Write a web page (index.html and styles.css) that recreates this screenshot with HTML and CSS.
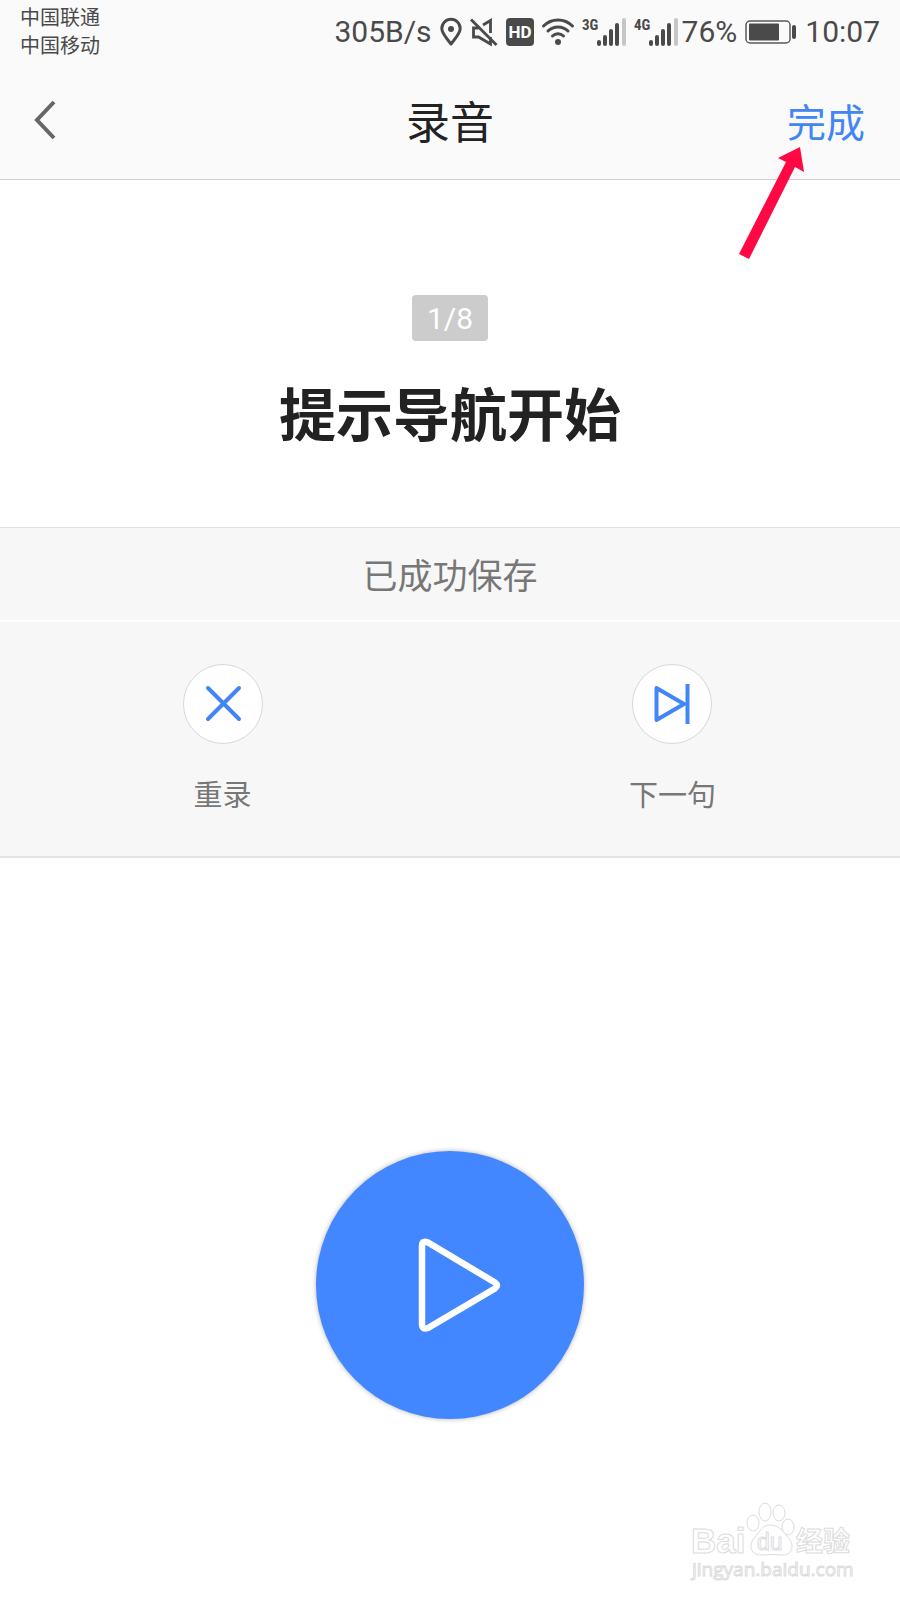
FILE: index.html
```
<!DOCTYPE html>
<html lang="zh-CN">
<head>
<meta charset="utf-8">
<meta name="viewport" content="width=device-width, initial-scale=1">
<title>录音</title>
<link rel="stylesheet" href="styles.css">
</head>
<body>
<div class="app">
  <header class="top">
    <div class="status">
      <div class="carriers">
        <span>中国联通</span>
        <span>中国移动</span>
      </div>
      <div class="indicators">
        <span>305B/s</span>
        <svg width="22" height="28" viewBox="0 0 22 28" fill="none" aria-hidden="true">
          <path d="M11 26C7 20.500 1.800 15.500 1.800 10.500a9.200 9.200 0 0 1 18.400 0C20.200 15.500 15 20.500 11 26Z" stroke="#4a4a4a" stroke-width="3" stroke-linejoin="round"/>
          <circle cx="11" cy="11" r="3" fill="#4a4a4a"/>
        </svg>
        <svg width="28" height="28" viewBox="0 0 28 28" fill="none" stroke="#4a4a4a" stroke-width="2.800" aria-hidden="true">
          <path d="M1 1.500 26.500 27"/>
          <path d="M8.500 10H3.500v9h5L20.500 26V19"/>
          <path d="M13 7 20.500 2.500V15"/>
        </svg>
        <svg width="28" height="28" viewBox="0 0 28 28" aria-hidden="true">
          <rect width="28" height="28" rx="4" fill="#4a4a4a"/>
          <text class="hd" x="14" y="20" text-anchor="middle">HD</text>
        </svg>
        <svg width="32" height="28" viewBox="0 0 32 28" fill="none" stroke="#4a4a4a" stroke-width="3" stroke-linecap="round" aria-hidden="true">
          <path d="M1.500 8a20.500 20.500 0 0 1 29 0"/>
          <path d="M6 13a14.200 14.200 0 0 1 20 0"/>
          <path d="M10.500 18a8 8 0 0 1 11 0"/>
          <circle cx="16" cy="24" r="3" fill="#4a4a4a" stroke="none"/>
        </svg>
        <svg width="44" height="28" viewBox="0 0 44 28" aria-hidden="true">
          <text class="net" x="0" y="12">3G</text>
          <g fill="#4a4a4a"><rect x="15" y="22" width="4" height="6" rx="2"/><rect x="21" y="17" width="4" height="11" rx="2"/><rect x="27" y="11" width="4" height="17" rx="2"/><rect x="33" y="5" width="4" height="23" rx="2"/></g>
          <rect x="40" y="0" width="4" height="28" rx="2" fill="#c6c6c6"/>
        </svg>
        <svg width="44" height="28" viewBox="0 0 44 28" aria-hidden="true">
          <text class="net" x="0" y="12">4G</text>
          <g fill="#4a4a4a"><rect x="15" y="22" width="4" height="6" rx="2"/><rect x="21" y="17" width="4" height="11" rx="2"/><rect x="27" y="11" width="4" height="17" rx="2"/><rect x="33" y="5" width="4" height="23" rx="2"/></g>
          <rect x="40" y="0" width="4" height="28" rx="2" fill="#c6c6c6"/>
        </svg>
        <span class="percent">76%</span>
        <svg width="52" height="24" viewBox="0 0 52 24" aria-hidden="true">
          <rect x="1" y="1" width="44" height="22" rx="4" fill="none" stroke="#5a5a5a" stroke-width="1.500"/>
          <rect x="4" y="3.500" width="30" height="17" rx="1" fill="#4a4a4a"/>
          <rect x="47" y="5" width="4" height="14" rx="2" fill="#4a4a4a"/>
        </svg>
        <time>10:07</time>
      </div>
    </div>
    <div class="navbar">
      <button class="back" type="button" aria-label="返回">
        <svg width="24" height="40" viewBox="0 0 24 40" fill="none" stroke="#666" stroke-width="4" aria-hidden="true"><path d="M19 2 2 20 19 38"/></svg>
      </button>
      <h1 class="title">录音</h1>
      <button class="done" type="button">完成</button>
    </div>
    <svg class="pointer" width="68" height="114" viewBox="0 0 68 114" aria-hidden="true">
      <path d="M62 0 66 25 57 20 11 112 1 107 48 15 40 11Z" fill="#ff0843"/>
    </svg>
  </header>

  <main class="content">
    <section class="prompt">
      <span class="count">1/8</span>
      <h2 class="phrase">提示导航开始</h2>
    </section>
    <p class="saved">已成功保存</p>
    <div class="actions">
      <button class="action" type="button">
        <span class="round">
          <svg width="40" height="40" viewBox="0 0 40 40" fill="none" stroke="#4285f4" stroke-width="4" stroke-linecap="round" aria-hidden="true"><path d="M5 4 36 35M36 4 5 35"/></svg>
        </span>
        重录
      </button>
      <button class="action" type="button">
        <span class="round">
          <svg width="40" height="40" viewBox="0 0 40 40" fill="none" stroke="#4285f4" stroke-width="4" stroke-linejoin="round" aria-hidden="true"><path d="M4.500 4V36L32 20ZM35.500 0V40"/></svg>
        </span>
        下一句
      </button>
    </div>
    <div class="player">
      <button class="play" type="button" aria-label="播放">
        <svg width="84" height="96" viewBox="0 0 84 96" fill="none" stroke="#fff" stroke-width="6.500" stroke-linejoin="round" aria-hidden="true">
          <path d="M5 9v78q0 6 6 4L78 51.500q4-3 0-6L11 5.500q-6-2.500-6 3.500Z"/>
        </svg>
      </button>
    </div>
  </main>

  <svg class="mark" width="170" height="90" viewBox="0 0 170 90" role="img" aria-label="Baidu 经验">
    <g fill="#fff" stroke="#dcdcdc">
      <text class="mark-name" x="5" y="55">Bai</text>
      <ellipse cx="67" cy="25" rx="6" ry="8"/>
      <ellipse cx="79" cy="14" rx="6" ry="9"/>
      <ellipse cx="93" cy="15" rx="6" ry="8"/>
      <ellipse cx="102" cy="29" rx="6" ry="8"/>
      <path d="M84 27c-8 0-10 7-15 12-6 6-6 18 6 18 6 0 14-1 20 0 12 1 14-10 7-18-5-5-8-12-18-12Z"/>
      <text class="mark-du" x="71" y="52">du</text>
      <text class="mark-cn" x="110" y="53">经验</text>
      <text class="mark-url" x="6" y="78">jingyan.baidu.com</text>
    </g>
  </svg>
</div>
</body>
</html>
```
FILE: styles.css
```
* {
  box-sizing: border-box;
}

body {
  margin: 0;
  background: #fff;
  color: #222;
  font-family: Roboto, "Noto Sans CJK SC", sans-serif;
}

button {
  margin: 0;
  padding: 0;
  border: 0;
  background: none;
  font: inherit;
  cursor: pointer;
}

svg {
  display: block;
  flex: none;
  overflow: visible;
}

h1,
h2,
p {
  margin: 0;
  font-weight: 400;
}

.app {
  position: relative;
  display: flex;
  flex-direction: column;
  min-height: 100vh;
}

.top {
  position: relative;
  background: #fafafa;
  border-bottom: 1px solid #d0d0d0;
}

.status {
  display: flex;
  justify-content: space-between;
  align-items: center;
  padding: 4px 20px 0;
  color: #4a4a4a;
}

.carriers {
  display: flex;
  flex-direction: column;
  font-size: 20px;
  line-height: 28px;
}

.indicators {
  display: flex;
  align-items: center;
  gap: 8px;
  font-size: 30px;
  line-height: 32px;
}

.percent {
  margin-left: -4px;
}

.hd {
  fill: #fff;
  font-size: 17px;
  font-weight: 700;
}

.net {
  fill: #4a4a4a;
  font-family: "Roboto Condensed", "Liberation Sans Narrow", Roboto, sans-serif;
  font-size: 15px;
  font-weight: 700;
}

.navbar {
  display: grid;
  grid-template-columns: 1fr auto 1fr;
  align-items: center;
  height: 119px;
  padding: 0 35px;
}

.back {
  justify-self: start;
}

.title {
  padding-top: 8px;
  font-size: 44px;
  line-height: 60px;
}

.done {
  justify-self: end;
  padding-top: 8px;
  color: #4285f4;
  font-size: 39px;
  line-height: 56px;
}

.pointer {
  position: absolute;
  top: 147px;
  right: 94px;
  z-index: 1;
}

.content {
  display: flex;
  flex: 1;
  flex-direction: column;
}

.prompt {
  display: flex;
  flex-direction: column;
  align-items: center;
  gap: 36px;
  padding: 115px 20px 70px;
}

.count {
  padding: 2px 15px 0;
  border-radius: 4px;
  background: #ccc;
  color: #fff;
  font-size: 30px;
  line-height: 44px;
}

.phrase {
  font-size: 57px;
  font-weight: 700;
  line-height: 80px;
}

.saved {
  padding-top: 8px;
  border-top: 1px solid #e0e0e0;
  border-bottom: 2px solid #fdfdfd;
  background: #f7f7f7;
  color: #777;
  font-size: 35px;
  line-height: 84px;
  text-align: center;
}

.actions {
  display: grid;
  grid-template-columns: 1fr 1fr;
  column-gap: 5px;
  padding: 42px 5px 38px 0;
  border-bottom: 2px solid #e4e4e4;
  background: #f7f7f7;
}

.action {
  display: flex;
  flex-direction: column;
  align-items: center;
  justify-self: center;
  gap: 30px;
  color: #777;
  font-size: 29px;
  line-height: 44px;
}

.round {
  display: flex;
  align-items: center;
  justify-content: center;
  width: 80px;
  height: 80px;
  border: 1px solid #d8d8d8;
  border-radius: 50%;
  background: #fff;
}

.player {
  display: flex;
  flex: 1;
  align-items: center;
  justify-content: center;
  padding-top: 112px;
}

.play {
  display: flex;
  align-items: center;
  justify-content: center;
  width: 268px;
  height: 268px;
  padding-left: 18px;
  border-radius: 50%;
  background: #4287ff;
  box-shadow: 0 0 5px rgba(0, 0, 0, 0.3);
}

.mark {
  position: absolute;
  right: 44px;
  bottom: 12px;
}

.mark-name {
  font-family: "Liberation Sans", sans-serif;
  font-size: 35px;
  font-weight: 700;
}

.mark-du {
  font-family: "Liberation Sans", sans-serif;
  font-size: 23px;
}

.mark-cn {
  font-family: "Noto Sans CJK SC", sans-serif;
  font-size: 27px;
  font-weight: 700;
}

.mark-url {
  font-family: "Open Sans", sans-serif;
  font-size: 19px;
}
```
